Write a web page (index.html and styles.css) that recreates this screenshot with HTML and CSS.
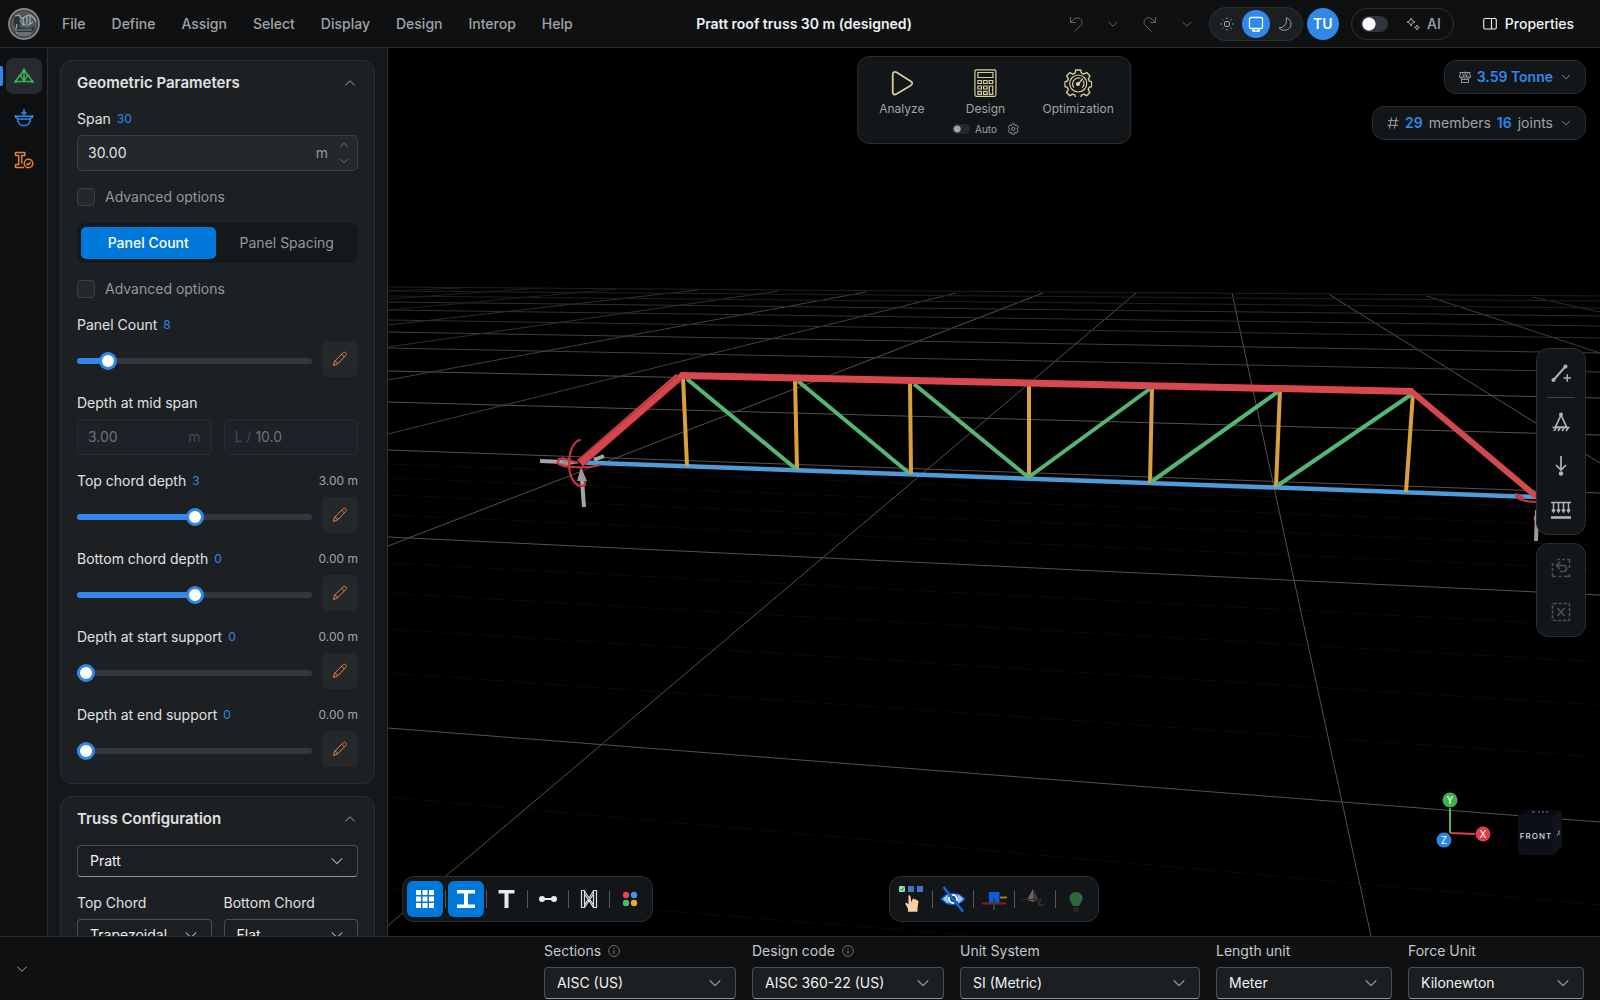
FILE: index.html
```html
<!DOCTYPE html>
<html lang="en">
<head>
<meta charset="utf-8">
<meta name="viewport" content="width=device-width, initial-scale=1">
<title>Pratt roof truss 30 m (designed)</title>
<link rel="stylesheet" href="styles.css">
</head>
<body>
<svg class="defs" aria-hidden="true">
  <symbol id="down" viewBox="0 0 16 16"><path d="M2 5l6 6 6-6" fill="none" stroke="currentColor" stroke-width="1.3"/></symbol>
  <symbol id="up" viewBox="0 0 16 16"><path d="M2 11l6-6 6 6" fill="none" stroke="currentColor" stroke-width="1.3"/></symbol>
  <symbol id="pencil" viewBox="0 0 16 16"><g fill="none" stroke="currentColor" stroke-width="1" stroke-linejoin="round"><path d="M1.500 14.500l1-4.200L11 1.800c.9-.9 2-.7 2.700 0 .8.800.9 1.900 0 2.700L5.500 13z"/><path d="M9.700 3.200l2.800 2.800M2.500 10.300c1.800.2 2.800 1.100 3 2.700"/></g></symbol>
  <symbol id="undo" viewBox="0 0 16 16"><path d="M2.500 1v5.500H8M2.700 6.300L5.500 3.400c2-2 5-2.200 7-.4 2 2 1.900 4.700-.1 6.700L6.500 15.500" fill="none" stroke="currentColor"/></symbol>
  <symbol id="info" viewBox="0 0 12 12"><circle cx="6" cy="6" r="5.400" fill="none" stroke="currentColor" stroke-width=".8"/><path d="M6 5.200V9M6 3v1.100" stroke="currentColor" stroke-width=".9"/></symbol>
  <symbol id="gear" viewBox="0 0 28 28"><path d="M11.500 1h5l.7 3.200 2.300 1 2.900-1.700 3.400 3.500-1.700 2.800.9 2.300 2.500.8v4.600l-2.600.8-.9 2.300 1.600 2.900-3.300 3.200-2.800-1.600-2.300 1-.7 2.900h-5l-.8-2.900-2.200-1-2.900 1.600-3.200-3.300L4 20.600l-.9-2.200L.600 17.500v-4.700l2.600-.8.900-2.300-1.700-2.800 3.300-3.400 2.800 1.700 2.300-1z" fill="none" stroke="currentColor" stroke-width="1.400" stroke-linejoin="round"/></symbol>
</svg>

<header class="topbar">
  <div class="topbar-left">
    <svg class="logo" viewBox="0 0 32 32" aria-label="Home">
      <circle cx="16" cy="16" r="15" fill="#3a4347" stroke="#8b8583" stroke-width="1.800"/>
      <circle cx="16" cy="16" r="12.300" fill="#4b575d" stroke="#6b5550" stroke-width="1"/>
      <path d="M6 16V9l4-1 3 5-2 6 10 2 6-3-1 4-5 4H10z" fill="#2b3439"/>
      <path d="M7 8l4-1 3 4 4-3 4-1 4 3 2 4M12 12l3 5h6l4-3M9 16l-1 5M15 9l1 8m3-10v9m3-8v8M8 25h15" fill="none" stroke="#9dadb4" stroke-width="1.200"/>
      <path d="M7 22h17M10 27h12" stroke="#7c8b92"/>
    </svg>
    <nav class="menu" aria-label="Main">
      <button>File</button><button>Define</button><button>Assign</button><button>Select</button><button>Display</button><button>Design</button><button>Interop</button><button>Help</button>
    </nav>
  </div>
  <h1 class="doc-title">Pratt roof truss 30 m (designed)</h1>
  <div class="topbar-right">
    <div class="history">
      <button aria-label="Undo"><svg class="i16"><use href="#undo"/></svg></button>
      <button aria-label="Undo list"><svg class="i12"><use href="#down"/></svg></button>
      <button aria-label="Redo"><svg class="i16 flip"><use href="#undo"/></svg></button>
      <button aria-label="Redo list"><svg class="i12"><use href="#down"/></svg></button>
    </div>
    <div class="account">
      <div class="theme">
        <button aria-label="Light"><svg class="i14" viewBox="0 0 14 14" fill="none" stroke="currentColor"><rect x="4.500" y="4.500" width="5" height="5" rx="1.500"/><path d="M7 .5v1.500M7 12v1.500M.5 7H2M12 7h1.500M2.400 2.400l1 1M10.600 10.600l1 1M2.400 11.600l1-1M10.600 3.400l1-1"/></svg></button>
        <button class="on" aria-label="System"><svg class="i16" viewBox="0 0 16 16" fill="none" stroke="currentColor" stroke-width="1.300"><rect x="1.500" y="1.500" width="13" height="11" rx="1.500"/><path d="M5.500 12.500V15M10.500 12.500V15M4 15h8"/></svg></button>
        <button aria-label="Dark"><svg class="i14" viewBox="0 0 14 14" fill="none" stroke="currentColor"><path d="M8 .8c4.500 1 6.500 6 4 9.700-2.700 3.600-8.200 3.700-11 .3C6 11.200 9.800 6 8 .8z" stroke-linejoin="round"/></svg></button>
      </div>
      <button class="avatar">TU</button>
    </div>
    <label class="ai"><input type="checkbox" class="switch"><svg class="i14" viewBox="0 0 14 14" fill="none" stroke="currentColor" stroke-linejoin="round"><path d="M5 1l1.200 2.800L9 5 6.200 6.200 5 9 3.800 6.200 1 5l2.800-1.200zM11 8l.7 1.800 1.800.7-1.800.7L11 13l-.7-1.800-1.800-.7 1.800-.7z"/></svg><span>AI</span></label>
    <button class="props"><svg class="i14" viewBox="0 0 14 14" fill="none" stroke="currentColor" stroke-width="1.100"><rect x=".7" y="1.500" width="12.600" height="10.500" rx="1.500"/><path d="M8.500 1.500V12"/></svg><span>Properties</span></button>
  </div>
</header>

<main class="workspace">
  <nav class="rail" aria-label="Modes">
    <button class="on green" aria-label="Geometry"><svg class="i20" viewBox="0 0 20 20" fill="none" stroke="currentColor" stroke-width="1.500" stroke-linejoin="round"><path d="M10 4L1.500 15.500h17zM10 4v11.500M6.500 9l3.500 6.500L13.500 9"/><g fill="currentColor" stroke="none"><circle cx="10" cy="4" r="1.500"/><circle cx="1.600" cy="15.500" r="1.500"/><circle cx="18.400" cy="15.500" r="1.500"/><circle cx="6" cy="9.700" r="1.300"/><circle cx="14" cy="9.700" r="1.300"/></g></svg></button>
    <button class="blue" aria-label="Loads"><svg class="i20" viewBox="0 0 20 20" fill="none" stroke="currentColor" stroke-width="1.500"><path d="M10 1v5.500M7.500 4L10 6.500 12.500 4M2 8.200h16M1.500 7v3M18.500 7v3M3 11h14M3 9c.5 5.500 3.300 8.700 7 8.700s6.500-3.200 7-8.700"/></svg></button>
    <button class="orange" aria-label="Sections"><svg class="i20" viewBox="0 0 20 20" fill="none" stroke="currentColor" stroke-width="1.500" stroke-linejoin="round"><path d="M10 17.500H1.500v-3h3.200v-9H1.500v-3h9.300v3H7.700v8"/><circle cx="14.500" cy="13.500" r="4.300"/><path d="M12.500 13.500l1.500 1.500 2.500-3"/></svg></button>
  </nav>

  <aside class="panel">
    <section class="card">
      <div class="card-head"><h2>Geometric Parameters</h2><button aria-label="Collapse"><svg class="i12"><use href="#up"/></svg></button></div>
      <div class="card-body">
        <div class="field">
          <div class="label-row"><label for="span">Span</label><b>30</b></div>
          <div class="box"><input id="span" value="30.00"><span class="unit">m</span><span class="spin"><button aria-label="Increase"><svg class="i10"><use href="#up"/></svg></button><button aria-label="Decrease"><svg class="i10"><use href="#down"/></svg></button></span></div>
        </div>
        <label class="check"><input type="checkbox"><span>Advanced options</span></label>
        <div class="segment"><button class="on">Panel Count</button><button>Panel Spacing</button></div>
        <label class="check"><input type="checkbox"><span>Advanced options</span></label>
        <div class="field">
          <div class="label-row"><label for="pc">Panel Count</label><b>8</b></div>
          <div class="slide"><input type="range" id="pc" value="10" style="--fill:13%"><button class="edit" aria-label="Edit"><svg class="i16"><use href="#pencil"/></svg></button></div>
        </div>
        <div class="field">
          <div class="label-row"><label for="mid">Depth at mid span</label></div>
          <div class="pair">
            <div class="box off"><input id="mid" value="3.00" disabled><span class="unit">m</span></div>
            <div class="box off"><span class="prefix">L /</span><input aria-label="Span to depth ratio" value="10.0" disabled></div>
          </div>
        </div>
        <div class="field">
          <div class="label-row"><label for="tc">Top chord depth</label><b>3</b><output>3.00 m</output></div>
          <div class="slide"><input type="range" id="tc" value="50" style="--fill:50%"><button class="edit" aria-label="Edit"><svg class="i16"><use href="#pencil"/></svg></button></div>
        </div>
        <div class="field">
          <div class="label-row"><label for="bc">Bottom chord depth</label><b>0</b><output>0.00 m</output></div>
          <div class="slide"><input type="range" id="bc" value="50" style="--fill:50%"><button class="edit" aria-label="Edit"><svg class="i16"><use href="#pencil"/></svg></button></div>
        </div>
        <div class="field">
          <div class="label-row"><label for="ss">Depth at start support</label><b>0</b><output>0.00 m</output></div>
          <div class="slide"><input type="range" id="ss" value="0" style="--fill:2%"><button class="edit" aria-label="Edit"><svg class="i16"><use href="#pencil"/></svg></button></div>
        </div>
        <div class="field">
          <div class="label-row"><label for="es">Depth at end support</label><b>0</b><output>0.00 m</output></div>
          <div class="slide"><input type="range" id="es" value="0" style="--fill:2%"><button class="edit" aria-label="Edit"><svg class="i16"><use href="#pencil"/></svg></button></div>
        </div>
      </div>
    </section>
    <section class="card">
      <div class="card-head"><h2>Truss Configuration</h2><button aria-label="Collapse"><svg class="i12"><use href="#up"/></svg></button></div>
      <div class="card-body">
        <div class="select"><select aria-label="Truss type"><option>Pratt</option></select><svg class="i14"><use href="#down"/></svg></div>
        <div class="pair">
          <div class="field"><div class="label-row"><label for="topc">Top Chord</label></div><div class="select"><select id="topc"><option>Trapezoidal</option></select><svg class="i14"><use href="#down"/></svg></div></div>
          <div class="field"><div class="label-row"><label for="botc">Bottom Chord</label></div><div class="select"><select id="botc"><option>Flat</option></select><svg class="i14"><use href="#down"/></svg></div></div>
        </div>
      </div>
    </section>
  </aside>

  <section class="viewport" aria-label="Model view">
    <svg class="scene" viewBox="388 48 1212 888" preserveAspectRatio="xMidYMid slice">
      <g stroke="#0b0b0b">
        <path d="M388 673L1600 757M388 629L1600 705M388 593L1600 662M388 563L1600 626M388 515L1600 569M388 495L1600 546M388 478L1600 526M388 464L1600 509M388 797L1600 905M388 889L980 936" stroke-dasharray="26 5"/>
      </g>
      <g stroke="#525252" stroke-width="1">
        <path d="M388 728L1600 822M388 537L1600 595M388 450L1600 493M388 402L1600 435M388 371L1600 398"/>
        <path d="M1136 293L446 876L376 936M1232 293L1371 936M1043 293L388 546M1330 295L1600 463"/>
      </g>
      <g stroke="#404040"><path d="M388 348L1600 372M388 332L1600 353M956 293L388 434M866 292L388 380M1427 296L1600 353"/></g>
      <g stroke="#303030"><path d="M388 320L1600 338M388 310L1600 326M388 302L1600 316M779 291L388 347M698 290L388 325M1532 297L1600 312"/></g>
      <g stroke="#202020"><path d="M388 296L1600 308M388 291L1600 301M388 287L1600 296M617 289L388 310M539 288L388 299M461 288L388 291"/></g>

      <path d="M540 461l24 1M594 460l10-4" stroke="#a3a5a7" stroke-width="4"/>
      <path d="M562 457l18 6-18 3z" fill="#8f9193"/>
      <path d="M583 462.500L1536 497" stroke="#4d9bd9" stroke-width="4.500"/>
      <g stroke="#d9a03c" stroke-width="4"><path d="M683 377L687 466M795 379L797 469M910 382L911 474M1029 385L1029 478M1152 387L1150 483M1280 390L1276 487M1413 393L1406 492"/></g>
      <g stroke="#55b572" stroke-width="4"><path d="M687 379L796 469M798 381L909 473M914 384L1028 477M1029 477L1151 388M1151 482L1279 391M1277 486L1412 394"/></g>
      <path d="M679 377L580 463" stroke="#d6454b" stroke-width="8.500"/>
      <path d="M677 376L577 461M682 380L584 465" stroke="#9c3035" stroke-width="1"/>
      <path d="M677 376l4-4 732 16v7L681 379z" fill="#d8484e"/>
      <path d="M1411 391L1537 497" stroke="#d2484e" stroke-width="6"/>
      <path d="M584 507l-2-27" stroke="#a3a5a7" stroke-width="4"/><path d="M581 467l6 14h-10z" fill="#999b9d"/>
      <g fill="none" stroke="#c8343c" stroke-width="2.200" stroke-linecap="round"><path d="M580 440c-7 1-11 13-11 24 0 14 7 25 16 21v-3M559 460c-4 4 2 6 14 7 10 1 20 0 27-2M559 459c6-2 12 3 17 3"/><path d="M1517 495c-3 4 9 7 21 7M1516 494l7 4M1537 515q-5 3 0 7"/></g>
      <path d="M1537 510l-1 31" stroke="#999b9d" stroke-width="4"/>
    </svg>

    <div class="float actions">
      <button class="action"><svg class="i28" viewBox="0 0 28 28" fill="none" stroke="currentColor" stroke-width="1.800"><path d="M4.500 6v17c0 2.400 1.600 3.200 3.700 2l14.300-8.500c2-1.300 2-3 0-4.200L8.200 3.300C6 2.200 4.500 3.500 4.500 6z"/></svg><span>Analyze</span></button>
      <div class="action-col">
        <button class="action"><svg class="i28" viewBox="0 0 28 28" fill="none" stroke="currentColor" stroke-width="1.200"><rect x="3.700" y=".8" width="21" height="26.500" rx="1.500"/><path d="M6.700 3.500h15v5h-15zM6.700 11.500h3.500v3H6.700zM12.400 11.500h3.500v3h-3.500zM18 11.500h3.500v3H18zM6.700 17h3.500v3H6.700zM12.400 17h3.500v3h-3.500zM6.700 22.300h3.500v3H6.700zM12.400 22.300h3.500v3h-3.500zM18 17h3.500v8.300H18z"/></svg><span>Design</span></button>
        <div class="auto"><label><input type="checkbox" class="switch small"><span>Auto</span></label><button aria-label="Design settings"><svg class="i12" viewBox="0 0 28 28"><path d="M11 2h6l1 4 4-1.500 3.500 5.500-3 4 3 4-3.500 5.500L18 22l-1 4h-6l-1-4-4 1.500L2.500 18l3-4-3-4L6 4.500 10 6z" fill="none" stroke="currentColor" stroke-width="2"/><circle cx="14" cy="14" r="4" fill="none" stroke="currentColor" stroke-width="2"/></svg></button></div>
      </div>
      <button class="action"><svg class="i28" viewBox="0 0 28 28" fill="none" stroke="currentColor" stroke-width="1.200"><use href="#gear"/><circle cx="14" cy="14.500" r="8.500"/><path d="M9.800 18.700a6 6 0 0 1 6.500-9.500M18.800 11.500a6 6 0 0 1-.8 7.200M14 15l4.500-5.500"/><circle cx="13.700" cy="15" r="1.500" fill="currentColor"/></svg><span>Optimization</span></button>
    </div>

    <div class="stats">
      <button class="float stat"><svg class="i12" viewBox="0 0 12 12" fill="none" stroke="currentColor" stroke-width=".9"><path d="M.5 1.500h11M1.500 1.500L.5 6h4l-1-4.500M8.500 1.500l-1 4.500h4l-1-4.500M6 .5v8M.5 6c.5 2 3.500 2 4 0M7.500 6c.5 2 3.500 2 4 0M2.500 8.500h7v3h-7z"/></svg><b>3.59 Tonne</b><svg class="i10"><use href="#down"/></svg></button>
      <button class="float stat"><svg class="i12" viewBox="0 0 12 12" fill="none" stroke="currentColor"><path d="M4.500.5l-2 11M9.500.5l-2 11M1 3.700h10.500M.5 8.300H11"/></svg><b>29</b><span>members</span><b>16</b><span>joints</span><svg class="i10"><use href="#down"/></svg></button>
    </div>

    <div class="side">
      <div class="float tools">
        <button aria-label="Add member"><svg class="i20" viewBox="0 0 20 20" fill="none" stroke="currentColor" stroke-width="1.900"><path d="M2.500 17L14 4"/><path d="M12.500 15h7.500M16.300 11.300v7.400" stroke-width="1.500"/><circle cx="2.500" cy="17" r="2" fill="currentColor" stroke="none"/><circle cx="14.500" cy="3.500" r="2" fill="currentColor" stroke="none"/></svg></button>
        <hr>
        <div class="tool-group">
          <button aria-label="Support"><svg class="i20" viewBox="0 0 20 20" fill="none" stroke="currentColor" stroke-width="1.700"><path d="M10 3L4.500 15h11zM1.500 15.500h17M5 16l-2 3M9 16l-2 3M13 16l-2 3M17 16l-2 3"/><circle cx="10" cy="2.500" r="2" fill="currentColor" stroke="none"/></svg></button>
          <button aria-label="Point load"><svg class="i20" viewBox="0 0 20 20" fill="none" stroke="currentColor" stroke-width="1.700"><path d="M10 0v14M5 9l5 5 5-5"/><circle cx="10" cy="17.500" r="2.200" fill="currentColor" stroke="none"/></svg></button>
          <button aria-label="Distributed load"><svg class="i20" viewBox="0 0 20 20" fill="none" stroke="currentColor" stroke-width="1.500"><path d="M0 2.500h20M2.500 2v9M7.500 2v9M12.500 2v9M17.500 2v9M1 9.500L2.500 12 4 9.500M6 9.500L7.500 12 9 9.500M11 9.500l1.500 2.500L14 9.500M16 9.500l1.500 2.500L19 9.500"/><path d="M0 17.500h20" stroke-width="2.600"/></svg></button>
        </div>
      </div>
      <div class="float tools">
        <div class="tool-group">
          <button class="dim" aria-label="Restore selection"><svg class="i20" viewBox="0 0 20 20" fill="none" stroke="currentColor" stroke-width="1.600"><path d="M6 1.500h3M11 1.500h3M16 1.500h2.500V5M1.500 5v3M1.500 10v3M1.500 15v3.500H5M7.500 18.500h3M13 18.500h5.500V16M18.500 7v3"/><path d="M9 4L5.500 7.500 9 11M5.500 7.500h7a3 3 0 0 1 0 6H9"/></svg></button>
          <button class="dim" aria-label="Clear selection"><svg class="i20" viewBox="0 0 20 20" fill="none" stroke="currentColor" stroke-width="1.600"><rect x="1.500" y="1.500" width="17" height="17" rx="1" stroke-dasharray="3.500 1.500"/><path d="M6.500 6l7 8M13.500 6l-7 8"/></svg></button>
        </div>
      </div>
    </div>

    <div class="gizmos">
      <svg class="axes" viewBox="0 0 56 64">
        <path d="M14 41V16" stroke="#4fb365" stroke-width="2"/><path d="M14 41l25 1" stroke="#d8434b" stroke-width="2"/>
        <circle cx="14" cy="8" r="7.500" fill="#3fb24f"/><circle cx="47" cy="42" r="7.500" fill="#dc3f49"/><circle cx="8" cy="48" r="7.500" fill="#2b86ea"/>
        <g class="axis-text"><text x="14" y="12">Y</text><text x="47" y="46">X</text><text x="8" y="52">Z</text></g>
      </svg>
      <svg class="cube" viewBox="0 0 44 46">
        <path d="M5 0h38l-8 5H0z" fill="#080a10"/><path d="M0 5h35v40H3q-3 0-3-3z" fill="#0c0f1a"/><path d="M35 5l8-5 1 36-9 9z" fill="#10131d"/>
        <path d="M14 2h3M20 2h2M24 2h2M28 2h2M39 26l3-6M40 21l2 4" stroke="#777b85" stroke-width="1"/>
        <text class="face" x="18" y="29">FRONT</text>
      </svg>
    </div>

    <div class="float bar bar-left">
      <button class="on" aria-label="Grid"><svg class="i20" viewBox="0 0 20 20" fill="#fff"><path d="M1 1h5v5H1zM7.500 1h5v5h-5zM14 1h5v5h-5zM1 7.500h5v5H1zM7.500 7.500h5v5h-5zM14 7.500h5v5h-5zM1 14h5v5H1zM7.500 14h5v5h-5zM14 14h5v5h-5z"/></svg></button><i></i>
      <button class="on" aria-label="Sections"><svg class="i20" viewBox="0 0 20 20" fill="#fff"><path d="M1 1h18v3.500h-7v11h7V19H1v-3.500h7v-11H1z"/></svg></button><i></i>
      <button aria-label="Labels"><svg class="i20" viewBox="0 0 20 20" fill="#e8e9ea"><path d="M1.500 1h16v3.500H11.500V19h-4V4.500h-6z"/></svg></button><i></i>
      <button aria-label="Members"><svg class="i20" viewBox="0 0 20 20" fill="#eee"><path d="M4 9h12v2H4z"/><circle cx="4" cy="10" r="3"/><circle cx="16" cy="10" r="3"/></svg></button><i></i>
      <button aria-label="Diagrams"><svg class="i20" viewBox="0 0 20 20" fill="none" stroke="#dcdddd" stroke-width="1.200"><path d="M2.500 1.500h3v17h-3zM14.500 1.500h3v17h-3zM5.500 2l9 14M5.500 5l9 13.500M14.500 2l-9 14M14.500 5l-9 13.500"/></svg></button><i></i>
      <button aria-label="Colours"><svg class="i20" viewBox="0 0 20 20"><circle cx="6" cy="6" r="3.200" fill="#e34850"/><circle cx="14" cy="6" r="3.200" fill="#3d96f4"/><circle cx="6" cy="14" r="3.200" fill="#49b96c"/><circle cx="14" cy="14" r="3.200" fill="#f0a52c"/></svg></button>
    </div>

    <div class="float bar bar-mid">
      <button aria-label="Pick filter"><svg class="i28" viewBox="0 0 28 28"><rect x="1" y="1" width="6" height="6" rx="1" fill="#8fe3b0"/><path d="M2.500 4l1.300 1.300L6 2.500" stroke="#15703c" fill="none"/><rect x="10" y="1" width="6" height="6" fill="#4472c4"/><rect x="19" y="1" width="6" height="6" fill="#4472c4"/><path d="M10.500 10.500q1.500-1 2 1l1 6 1-3.500q1.500-.8 2 .5 1.500-.7 2.200.8 1.800-.5 1.800 1.500l-1 6v4H10v-3l-2.700-5q.5-1.700 2-.5l1.200 1.200z" fill="#f6cfa4"/></svg></button><i></i>
      <button aria-label="Hide"><svg class="i28" viewBox="0 0 28 28" fill="none"><path d="M1 14Q14 1 27 14 14 27 1 14z" fill="#0a55c0"/><path d="M3.500 14Q8 9.500 10 9q-2.500 5 0 10-2-.5-6.500-5zM24.500 14Q20 9.500 18 9q2.500 5 0 10 2-.5 6.500-5z" fill="#9cc6f5"/><circle cx="14" cy="14" r="4" fill="#0a4aa8" stroke="#f2f8ff" stroke-width="2.200"/><path d="M4.500 2L24 26.500" stroke="#0c3f8c" stroke-width="3"/><path d="M4.500 2L24 26.500" stroke="#1a74e4" stroke-width="1.400"/></svg></button><i></i>
      <button aria-label="Local axes"><svg class="i28" viewBox="0 0 28 28"><path d="M9 7h10.500v11H9z" fill="#0a5be0"/><path d="M2 18.500h24" stroke="#8e1a1e" stroke-width="2"/><path d="M14 13v12" stroke="#17502c" stroke-width="2"/><path d="M20 12.500h7" stroke="#b08a10" stroke-width="1.800"/></svg></button><i></i>
      <button aria-label="Supports"><svg class="i28" viewBox="0 0 28 28"><path d="M12 4L6 15l7 2z" fill="#6d6669"/><path d="M12 4l6 11-5 2z" fill="#503638"/><path d="M0 14.500h21" stroke="#352527" stroke-width="1.200"/><path d="M20 15q-3 2-2 5h5" stroke="#204028" stroke-width="1.500" fill="none"/></svg></button><i></i>
      <button aria-label="Lighting"><svg class="i28" viewBox="0 0 28 28"><path d="M14 7c4 0 6.500 2.800 6.500 6.500 0 3-2.500 5-3.500 7.500h-6c-1-2.500-3.500-4.500-3.500-7.500C7.500 9.800 10 7 14 7z" fill="#2f663c"/><path d="M11 22h6v3.500l-1.500 1.500h-3L11 25.500z" fill="#2a2223"/><path d="M17 10q2 1 2 3" stroke="#4b8558" fill="none"/></svg></button>
    </div>
  </section>
</main>

<footer class="footer">
  <button class="fold" aria-label="Expand"><svg class="i12"><use href="#down"/></svg></button>
  <div class="units">
    <div class="field w192"><div class="label-row"><label for="f1">Sections</label><svg class="i12"><use href="#info"/></svg></div><div class="select"><select id="f1"><option>AISC (US)</option></select><svg class="i14"><use href="#down"/></svg></div></div>
    <div class="field w192"><div class="label-row"><label for="f2">Design code</label><svg class="i12"><use href="#info"/></svg></div><div class="select"><select id="f2"><option>AISC 360-22 (US)</option></select><svg class="i14"><use href="#down"/></svg></div></div>
    <div class="field w240"><div class="label-row"><label for="f3">Unit System</label></div><div class="select"><select id="f3"><option>SI (Metric)</option></select><svg class="i14"><use href="#down"/></svg></div></div>
    <div class="field w176"><div class="label-row"><label for="f4">Length unit</label></div><div class="select"><select id="f4"><option>Meter</option></select><svg class="i14"><use href="#down"/></svg></div></div>
    <div class="field w176"><div class="label-row"><label for="f5">Force Unit</label></div><div class="select"><select id="f5"><option>Kilonewton</option></select><svg class="i14"><use href="#down"/></svg></div></div>
  </div>
</footer>
</body>
</html>
```
FILE: styles.css
```css
* { box-sizing: border-box; }
body {
  margin: 0;
  height: 100vh;
  display: grid;
  grid-template-rows: 48px minmax(0, 1fr) 64px;
  background: #0e1012;
  color: #e0e2e3;
  font: 14px/20px Inter, "Liberation Sans", sans-serif;
  overflow: hidden;
}
button, input, select { font: inherit; color: inherit; }
button { border: 0; padding: 0; background: none; display: inline-flex; align-items: center; justify-content: center; }
svg { display: block; flex: none; }
.defs { position: absolute; width: 0; height: 0; }
.i10 { width: 10px; height: 10px; }
.i12 { width: 12px; height: 12px; }
.i14 { width: 14px; height: 14px; }
.i16 { width: 16px; height: 16px; }
.i20 { width: 20px; height: 20px; }
.i28 { width: 28px; height: 28px; }
.flip { transform: scaleX(-1); }

/* top bar */
.topbar { display: flex; align-items: center; padding-left: 8px; border-bottom: 1px solid #2b2f31; }
.topbar-left, .topbar-right { flex: 1 1 0; display: flex; align-items: center; }
.topbar-left { gap: 9px; }
.logo { width: 32px; height: 32px; }
.menu { display: flex; }
.menu button { padding: 0 13px; height: 32px; color: #a0a4a6; font-weight: 500; }
.doc-title { margin: 0; font-size: 14px; font-weight: 600; white-space: nowrap; color: #f0f1f2; }
.topbar-right { justify-content: flex-end; gap: 12px; color: #a0a4a6; }
.history { display: flex; align-items: center; gap: 23px; margin-right: 4px; color: #5e6265; }
.account { display: flex; align-items: center; gap: 4px; }
.theme { display: flex; align-items: center; justify-content: space-between; width: 94px; height: 34px; padding: 0 3px; border: 1px solid #2c3033; border-radius: 17px; background: #1b1f22; }
.theme button { width: 28px; height: 28px; border-radius: 50%; }
.theme .on { background: #2f88ea; color: #fff; }
.avatar { width: 32px; height: 32px; border-radius: 50%; background: #2f88ea; color: #fff; font-weight: 600; }
.ai { display: flex; align-items: center; width: 103px; height: 32px; padding: 0 12px 0 9px; border: 1px solid #2c3033; border-radius: 16px; font-weight: 500; }
.ai svg { margin-left: auto; margin-right: 7px; }
.switch { appearance: none; margin: 0; width: 27px; height: 16px; border-radius: 8px; background: radial-gradient(circle at 8px 50%, #fff 6px, transparent 7px) #31353e; }
.switch.small { width: 18px; height: 10px; background: radial-gradient(circle at 5px 50%, #a2a5a8 3px, transparent 4px) #25292c; }
.props { gap: 8px; margin: 0 26px 0 17px; color: #f0f1f2; font-weight: 500; }

/* workspace */
.workspace { display: grid; grid-template-columns: 48px 340px minmax(0, 1fr); min-height: 0; }
.rail { display: flex; flex-direction: column; align-items: center; gap: 6px; padding-top: 10px; border-right: 1px solid #2b2f31; }
.rail button { position: relative; width: 36px; height: 36px; border-radius: 7px; }
.rail .on { background: #262b2f; }
.rail .on::before { content: ""; position: absolute; left: -6px; top: 8px; width: 3px; height: 20px; background: #2f88ea; border-radius: 0 2px 2px 0; }
.green { color: #3fb24f; }
.blue { color: #2f88ea; }
.orange { color: #e58036; }

.panel { display: flex; flex-direction: column; gap: 12px; padding: 12px; overflow: hidden; background: #13181a; border-right: 1px solid #2b2f31; }
.card { flex: none; border: 1px solid #2a2e30; border-radius: 12px; background: #1c2022; padding: 0 16px 16px; }
.card-head { display: flex; align-items: center; justify-content: space-between; height: 42px; padding-top: 2px; }
.card-head h2 { margin: 0; font-size: 15px; font-weight: 600; }
.card-head button { width: 16px; height: 16px; color: #a0a4a6; }
.card-body { display: flex; flex-direction: column; gap: 16px; padding-top: 6px; }
.field { display: flex; flex-direction: column; gap: 6px; min-width: 0; }
.label-row { display: flex; align-items: center; gap: 6px; height: 20px; white-space: nowrap; }
.label-row b { color: #2f88ea; font-size: 12px; font-weight: 400; }
.label-row output { margin-left: auto; color: #a0a4a6; font-size: 12px; }
.label-row svg { margin-left: 1px; color: #85898c; }
.pair { display: grid; grid-template-columns: 1fr 1fr; gap: 12px; }
.box { display: flex; align-items: center; gap: 11px; height: 36px; padding: 0 8px 0 10px; border: 1px solid #3b4044; border-radius: 5px; background: #23282d; }
.box input { flex: 1; min-width: 0; width: 0; border: 0; padding: 0; background: none; }
.box.off { background: #1e2127; border-color: #292d32; color: #6d7174; gap: 4px; padding-right: 10px; }
.unit { color: #94989b; }
.off .unit, .prefix { color: #46494c; }
.spin { display: flex; flex-direction: column; gap: 6px; color: #85898c; }
.check { display: flex; align-items: center; gap: 10px; height: 20px; color: #94989b; }
.check input { appearance: none; margin: 0; width: 18px; height: 18px; border: 1px solid #3b4044; border-radius: 4px; background: #23282d; }
.segment { display: grid; grid-template-columns: 1fr 1fr; gap: 4px; height: 40px; padding: 4px; border-radius: 8px; background: #14181a; }
.segment button { border-radius: 5px; color: #94989b; }
.segment .on { background: #0078d9; color: #fff; font-weight: 500; }
.slide { display: flex; align-items: center; gap: 10px; height: 36px; }
.slide input { appearance: none; flex: 1; min-width: 0; margin: 4px 0 0; height: 6px; border-radius: 3px; background: linear-gradient(90deg, #2f88ea var(--fill), #32373f var(--fill)); }
.slide input::-webkit-slider-thumb { appearance: none; width: 18px; height: 18px; border: 3px solid #2f88ea; border-radius: 50%; background: #fff; }
.edit { width: 36px; height: 36px; border-radius: 6px; background: #24282b; color: #dd8446; }
.select { display: grid; align-items: center; }
.select > * { grid-area: 1 / 1; }
.select select { appearance: none; width: 100%; height: 32px; padding: 0 32px 0 12px; border: 1px solid #4b4f52; border-bottom-color: #8f9395; border-radius: 4px; background: #1b1f21; color: #f0f1f2; }
.select svg { justify-self: end; margin-right: 14px; color: #a0a4a6; pointer-events: none; }

/* model view and what floats over it */
.viewport { position: relative; background: #000; overflow: hidden; }
.scene { width: 100%; height: 100%; }
.float { border: 1px solid #2a2e30; border-radius: 12px; background: #131618; color: #a0a4a6; }
.actions { position: absolute; top: 8px; left: 50%; transform: translateX(-50%); display: flex; gap: 36px; height: 88px; padding: 12px 16px 0 21px; font-size: 12px; }
.action { flex-direction: column; gap: 2px; height: 50px; line-height: 20px; }
.action svg { color: #d6cf98; }
.action-col { display: flex; flex-direction: column; align-items: center; width: 66px; margin: 0 -12px 0 -8px; }
.auto, .auto label { display: flex; align-items: center; gap: 5px; font-size: 10px; }
.auto { gap: 10px; }
.stats { position: absolute; top: 12px; right: 14px; display: flex; flex-direction: column; align-items: flex-end; gap: 12px; }
.stat { gap: 6px; height: 34px; padding: 0 14px; }
.stat svg:last-child { margin-left: 2px; }
.stat b { color: #2f88ea; font-weight: 600; }
.side { position: absolute; top: 300px; right: 14px; display: flex; flex-direction: column; gap: 8px; }
.tools { display: flex; flex-direction: column; align-items: center; gap: 6px; width: 50px; padding: 6px; color: #b0b4b7; }
.tools hr { width: 28px; height: 1px; margin: 0; border: 0; background: #42464a; }
.tools button { width: 36px; height: 36px; }
.tool-group { display: flex; flex-direction: column; gap: 8px; }
.tools .dim { color: #4c5053; }
.gizmos { position: absolute; right: 38px; bottom: 80px; display: flex; align-items: flex-end; gap: 26px; }
.axes { width: 56px; height: 64px; }
.cube { width: 44px; height: 46px; }
.axis-text { fill: #fff; font-size: 10px; text-anchor: middle; }
.face { fill: #d5d8df; font-size: 8px; font-weight: 500; text-anchor: middle; letter-spacing: 1px; }
.bar { position: absolute; bottom: 14px; display: flex; align-items: center; gap: 2px; height: 46px; padding: 4px; }
.bar button { width: 36px; height: 36px; border-radius: 6px; }
.bar .on { background: #0078d9; }
.bar i { width: 1px; height: 18px; background: #54585b; }
.bar-left { left: 14px; }
.bar-mid { left: 50%; transform: translateX(-50%); }

/* footer */
.footer { display: flex; justify-content: space-between; border-top: 1px solid #2b2f31; padding: 4px 16px 0; }
.fold { width: 12px; color: #a0a4a6; height: 56px; }
.units { display: flex; gap: 16px; }
.w192 { width: 192px; }
.w240 { width: 240px; }
.w176 { width: 176px; }
.footer label { color: #c6c9cb; }
```
